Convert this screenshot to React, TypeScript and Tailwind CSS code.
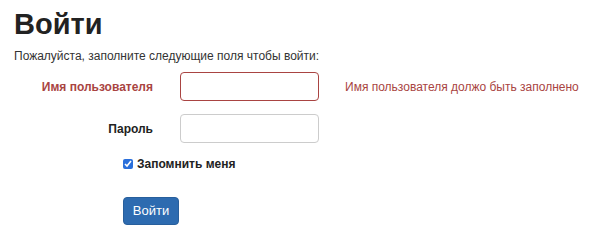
export default function App() {
  const font = { fontFamily: '"Liberation Sans", Arial, sans-serif' };
  return (
    <div className="w-[600px] h-[230px] bg-white text-[#333] overflow-hidden" style={font}>
      <div className="pl-[14px]">
        <h1 className="text-[29px] leading-none font-bold text-[#222] pt-[10px]">Войти</h1>
        <p className="text-[12px] leading-none mt-[11px]">Пожалуйста, заполните следующие поля чтобы войти:</p>
      </div>
      <div className="mt-[10px] flex flex-col">
        <div className="flex items-center h-[29px]">
          <label className="w-[153px] text-right text-[12px] font-bold text-[#a94442]">Имя пользователя</label>
          <input className="ml-[27px] w-[139px] h-[29px] rounded-[4px] border border-[#a94442] outline-none" />
          <div className="ml-[26px] text-[12px] text-[#a94442]">Имя пользователя должо быть заполнено</div>
        </div>
        <div className="flex items-center h-[29px] mt-[13px]">
          <label className="w-[153px] text-right text-[12px] font-bold text-[#222]">Пароль</label>
          <input type="password" className="ml-[27px] w-[139px] h-[29px] rounded-[4px] border border-[#ccc] outline-none" />
        </div>
        <div className="flex items-center mt-[12px] ml-[123px]">
          <input type="checkbox" defaultChecked className="w-[10px] h-[10px] m-0 accent-[#2a6fdb]" />
          <span className="ml-[4px] text-[12px] font-bold text-[#222]">Запомнить меня</span>
        </div>
        <div className="ml-[123px] mt-[24px]">
          <button className="w-[56px] h-[28px] rounded-[4px] bg-[#2d6bb0] border border-[#285f9c] text-white text-[13px]">Войти</button>
        </div>
      </div>
    </div>
  );
}
